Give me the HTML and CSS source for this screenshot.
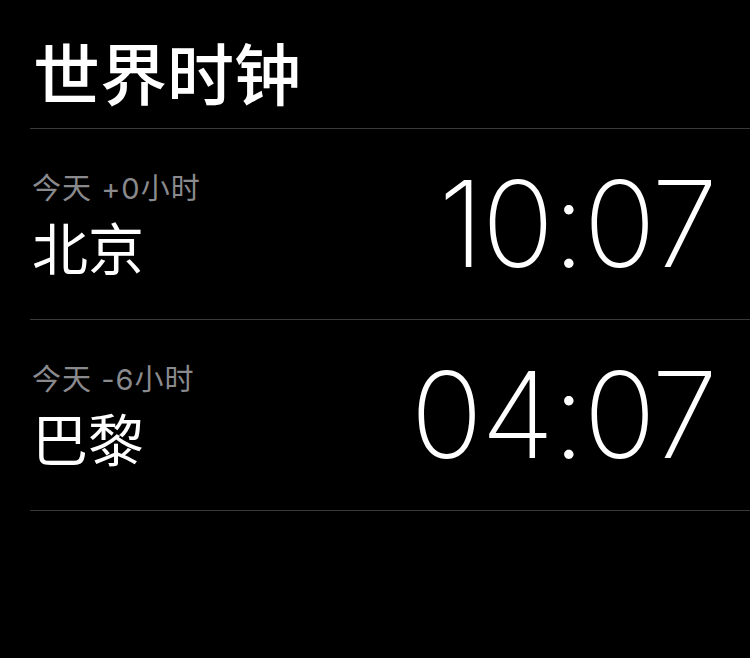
FILE: index.html
```html
<!DOCTYPE html>
<html lang="zh-CN">
<head>
<meta charset="utf-8">
<title>世界时钟</title>
<link rel="stylesheet" href="styles.css">
</head>
<body>
<main class="screen">
  <header class="header">
    <h1 class="title">世界时钟</h1>
  </header>
  <ul class="clock-list">
    <li class="clock-row">
      <div class="place">
        <div class="offset">今天 +0小时</div>
        <div class="city">北京</div>
      </div>
      <div class="time">10:07</div>
    </li>
    <li class="clock-row">
      <div class="place">
        <div class="offset">今天 -6小时</div>
        <div class="city">巴黎</div>
      </div>
      <div class="time">04:07</div>
    </li>
  </ul>
</main>
</body>
</html>
```

FILE: styles.css
```css
html, body {
  margin: 0;
  padding: 0;
  background: #000;
}

.screen {
  width: 750px;
  height: 658px;
  background: #000;
  color: #fff;
  font-family: "Inter", "Noto Sans CJK SC", sans-serif;
  overflow: hidden;
}

.header {
  padding: 38px 0 24px 33px;
}

.title {
  margin: 0;
  font-family: "Noto Sans CJK SC", sans-serif;
  font-size: 67px;
  font-weight: 500;
  line-height: 66px;
  letter-spacing: 0;
}

.clock-list {
  list-style: none;
  margin: 0 0 0 30px;
  padding: 0;
  border-top: 1px solid #3a3a3c;
}

.clock-row {
  display: flex;
  align-items: center;
  justify-content: space-between;
  height: 190px;
  padding: 0 34px 0 2px;
  border-bottom: 1px solid #3a3a3c;
}

.place {
  display: flex;
  flex-direction: column;
}

.offset {
  font-family: "Inter", "Noto Sans CJK SC", sans-serif;
  font-size: 29px;
  line-height: 28px;
  letter-spacing: 1px;
  color: #8a8a8e;
}

.city {
  margin-top: 15px;
  font-family: "Noto Sans CJK SC", sans-serif;
  font-size: 56px;
  line-height: 56px;
  color: #fff;
}

.time {
  font-family: "Inter", sans-serif;
  font-size: 120px;
  font-weight: 150;
  line-height: 1;
  color: #fff;
  letter-spacing: -2px;
}
```
